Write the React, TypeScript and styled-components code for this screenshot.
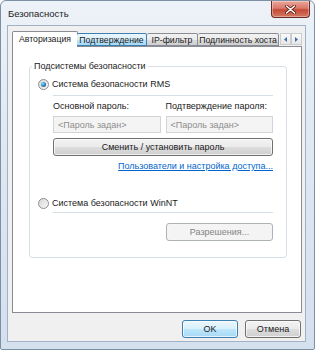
import React from 'react';
import styled, {createGlobalStyle} from 'styled-components';

const GlobalStyle = createGlobalStyle`
	html, body {
		margin: 0;
		padding: 0;
		background: #ffffff;
	}
	body {
		font-family: "Liberation Sans", Arial, sans-serif;
		font-size: 9px;
		color: #1a1a1a;
	}
`;

const Window = styled.div`
	width: 315px;
	height: 350px;
	box-sizing: border-box;
	border: 1px solid #7d8fa5;
	border-radius: 6px 6px 2px 2px;
	background: linear-gradient(180deg, #edf2f8 0%, #dfe8f3 40%, #d4e0ee 100%);
	padding: 0 8px 7px 6px;
	display: flex;
	flex-direction: column;
`;

const TitleBar = styled.div`
	height: 24px;
	display: flex;
	justify-content: space-between;
	align-items: flex-start;
`;

const Title = styled.span`
	font-size: 9.5px;
	line-height: 25px;
	padding-left: 1px;
	color: #1c1c1c;
`;

const CloseButton = styled.div`
	width: 39px;
	height: 17px;
	margin-right: -4px;
	box-sizing: border-box;
	border: 1px solid #6b2a24;
	border-top: none;
	border-radius: 0 0 4px 4px;
	background: linear-gradient(180deg, #eaa89b 0%, #d9786a 45%, #c54a37 55%, #d47a63 100%);
	display: flex;
	align-items: center;
	justify-content: center;
	box-shadow: inset 0 0 0 1px rgba(255, 255, 255, 0.35);
`;

const Client = styled.div`
	flex: 1;
	display: flex;
	flex-direction: column;
	border: 1px solid #a2b2c6;
	background: #f0f0f0;
	padding: 5px 3px 3px 4px;
`;

const TabStrip = styled.div`
	height: 15px;
	display: flex;
	align-items: flex-end;
	position: relative;
	z-index: 1;
`;

const Tab = styled.div<{$width: number; $active?: boolean; $hover?: boolean}>`
	width: ${({$width}) => $width}px;
	height: ${({$active}) => ($active ? 16 : 13)}px;
	margin-bottom: ${({$active}) => ($active ? -1 : 0)}px;
	margin-right: ${({$active}) => ($active ? -1 : 0)}px;
	box-sizing: border-box;
	border: 1px solid ${({$hover}) => ($hover ? '#3c7fb1' : '#898c95')};
	border-bottom: ${({$active}) => ($active ? 'none' : undefined)};
	border-left: ${({$active}) => ($active ? undefined : 'none')};
	border-radius: 2px 2px 0 0;
	background: ${({$active, $hover}) =>
		$active
			? '#ffffff'
			: $hover
			? 'linear-gradient(180deg, #eaf6fd 0%, #d9f0fc 50%, #bee6fd 51%, #a7d9f5 100%)'
			: 'linear-gradient(180deg, #f2f2f2 0%, #ebebeb 50%, #dddddd 51%, #cfcfcf 100%)'};
	display: flex;
	align-items: center;
	justify-content: center;
	white-space: nowrap;
	overflow: hidden;
	font-size: 8.7px;
	line-height: 12px;
	color: #1a1a1a;
	padding-bottom: ${({$active}) => ($active ? 2 : 0)}px;

	&:first-child {
		border-left: 1px solid #898c95;
	}
`;

const Scroller = styled.div`
	margin-left: auto;
	display: flex;
	align-self: center;
	margin-top: 1px;
`;

const ScrollButton = styled.div`
	width: 11px;
	height: 12px;
	box-sizing: border-box;
	border: 1px solid #c9ccd1;
	background: linear-gradient(180deg, #fafafa 0%, #e6e6e6 100%);
	display: flex;
	align-items: center;
	justify-content: center;
`;

const Panel = styled.div`
	height: 267px;
	box-sizing: border-box;
	border: 1px solid #898c95;
	background: #ffffff;
	padding: 13px 14px 0 16px;
`;

const GroupBox = styled.fieldset`
	margin: 0;
	height: 198px;
	box-sizing: border-box;
	border: 1px solid #d5dfe5;
	border-radius: 3px;
	padding: 0 13px 0 0;
	display: flex;
	flex-direction: column;
`;

const Legend = styled.legend`
	margin-left: 2px;
	padding: 0 2px;
	font-size: 9px;
	line-height: 12px;
	color: #1a1a1a;
`;

const RadioRow = styled.label<{$top: number}>`
	display: flex;
	align-items: center;
	gap: 3px;
	height: 14px;
	margin-top: ${({$top}) => $top}px;
	margin-left: 8px;
	font-size: 9px;
	color: #1a1a1a;
`;

const RadioMark = styled.span<{$checked?: boolean}>`
	width: 11px;
	height: 11px;
	box-sizing: border-box;
	border-radius: 50%;
	border: 1px solid #8f8f8f;
	background: linear-gradient(135deg, #d8d8d8 0%, #f6f6f6 100%);
	display: flex;
	align-items: center;
	justify-content: center;

	&::after {
		content: '';
		display: ${({$checked}) => ($checked ? 'block' : 'none')};
		width: 5px;
		height: 5px;
		border-radius: 50%;
		background: radial-gradient(circle at 35% 35%, #8fe0f8 0%, #2d8fc7 45%, #17406f 100%);
	}
`;

const Divider = styled.div<{$top: number}>`
	height: 1px;
	margin: ${({$top}) => $top}px 0 0 23px;
	background: #d5dfe5;
`;

const Indented = styled.div<{$top: number}>`
	margin: ${({$top}) => $top}px 0 0 23px;
`;

const Columns = styled.div`
	display: grid;
	grid-template-columns: 1fr 1fr;
	column-gap: 5px;
`;

const FieldLabel = styled.div`
	height: 12px;
	line-height: 12px;
	font-size: 9px;
	color: #1a1a1a;
	white-space: nowrap;
`;

const TextBox = styled.div`
	margin-top: 4px;
	height: 17px;
	box-sizing: border-box;
	border: 1px solid #d2d4d7;
	background: #f4f4f4;
	padding-left: 4px;
	display: flex;
	align-items: center;
	font-size: 9px;
	color: #8d8d8d;
`;

const Button = styled.div<{$width?: number; $disabled?: boolean; $default?: boolean}>`
	height: 18px;
	width: ${({$width}) => ($width ? `${$width}px` : 'auto')};
	box-sizing: border-box;
	border-radius: 3px;
	border: 1px solid
		${({$disabled, $default}) => ($disabled ? '#adb2b5' : $default ? '#3c7fb1' : '#707070')};
	background: ${({$disabled, $default}) =>
		$disabled
			? '#f4f4f4'
			: $default
			? 'linear-gradient(180deg, #eaf6fd 0%, #d9f0fc 50%, #bee6fd 51%, #a7d9f5 100%)'
			: 'linear-gradient(180deg, #f2f2f2 0%, #ebebeb 50%, #dddddd 51%, #cfcfcf 100%)'};
	box-shadow: inset 0 0 0 1px
		${({$disabled}) => ($disabled ? 'transparent' : 'rgba(255, 255, 255, 0.7)')};
	display: flex;
	align-items: center;
	justify-content: center;
	font-size: 9px;
	color: ${({$disabled}) => ($disabled ? '#838383' : '#1a1a1a')};
`;

const LinkRow = styled.div`
	margin-top: 4px;
	height: 12px;
	display: flex;
	justify-content: flex-end;
`;

const Link = styled.a`
	font-size: 9px;
	line-height: 12px;
	color: #0066cc;
	text-decoration: underline;
`;

const RightRow = styled.div`
	display: flex;
	justify-content: flex-end;
`;

const Footer = styled.div`
	margin-top: 7px;
	display: flex;
	justify-content: flex-end;
	gap: 7px;
	padding-right: 1px;
`;

export default function App() {
	return (
		<>
			<GlobalStyle />
			<Window>
				<TitleBar>
					<Title>Безопасность</Title>
					<CloseButton>
						<svg width="11" height="9" viewBox="0 0 11 9">
							<path
								d="M1.5 1 L9.5 8 M9.5 1 L1.5 8"
								stroke="#5a1a12"
								strokeWidth="3"
								strokeLinecap="round"
							/>
							<path
								d="M1.5 1 L9.5 8 M9.5 1 L1.5 8"
								stroke="#ffffff"
								strokeWidth="1.6"
								strokeLinecap="round"
							/>
						</svg>
					</CloseButton>
				</TitleBar>
				<Client>
					<TabStrip>
						<Tab $width={66} $active>
							Авторизация
						</Tab>
						<Tab $width={70} $hover>
							Подтверждение
						</Tab>
						<Tab $width={51}>IP-фильтр</Tab>
						<Tab $width={81}>Подлинность хоста</Tab>
						<Scroller>
							<ScrollButton>
								<svg width="4" height="5" viewBox="0 0 4 5">
									<path d="M3 0 L0 2.5 L3 5 Z" fill="#3d6fa5" />
								</svg>
							</ScrollButton>
							<ScrollButton>
								<svg width="4" height="5" viewBox="0 0 4 5">
									<path d="M0 0 L3 2.5 L0 5 Z" fill="#3d6fa5" />
								</svg>
							</ScrollButton>
						</Scroller>
					</TabStrip>
					<Panel>
						<GroupBox>
							<Legend>Подсистемы безопасности</Legend>
							<RadioRow $top={5}>
								<RadioMark $checked />
								Система безопасности RMS
							</RadioRow>
							<Divider $top={4} />
							<Indented $top={4}>
								<Columns>
									<div>
										<FieldLabel>Основной пароль:</FieldLabel>
										<TextBox>&lt;Пароль задан&gt;</TextBox>
									</div>
									<div>
										<FieldLabel>Подтверждение пароля:</FieldLabel>
										<TextBox>&lt;Пароль задан&gt;</TextBox>
									</div>
								</Columns>
							</Indented>
							<Indented $top={5}>
								<Button>Сменить / установить пароль</Button>
							</Indented>
							<Indented $top={0}>
								<LinkRow>
									<Link>Пользователи и настройка доступа...</Link>
								</LinkRow>
							</Indented>
							<RadioRow $top={24}>
								<RadioMark />
								Система безопасности WinNT
							</RadioRow>
							<Divider $top={2} />
							<Indented $top={10}>
								<RightRow>
									<Button $width={107} $disabled>
										Разрешения...
									</Button>
								</RightRow>
							</Indented>
						</GroupBox>
					</Panel>
					<Footer>
						<Button $width={56} $default>
							OK
						</Button>
						<Button $width={56}>Отмена</Button>
					</Footer>
				</Client>
			</Window>
		</>
	);
}
